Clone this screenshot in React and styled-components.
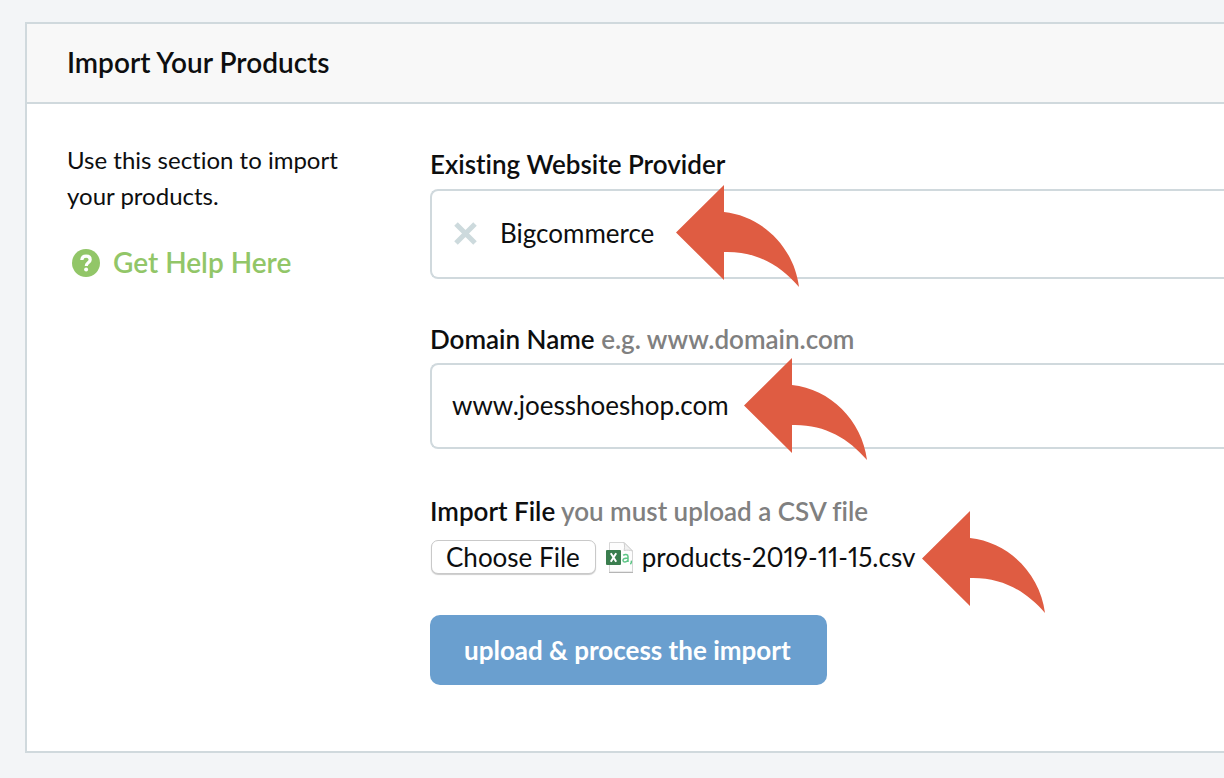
import React, { useRef, useState } from "react";
import styled, { createGlobalStyle } from "styled-components";

const GlobalStyle = createGlobalStyle`
  * {
    box-sizing: border-box;
  }

  body {
    margin: 0;
    background: #f3f5f7;
    color: #0d0e0f;
    font-family: Lato, "Open Sans", sans-serif;
    font-size: 24px;
    font-variant-ligatures: none;
  }

  button, input, select {
    font-family: inherit;
    color: inherit;
  }
`;

// Layout
const Page = styled.main`
  padding: 22px 0 25px 25px;
`;

const Panel = styled.section`
  background: #fff;
  border: 2px solid #d0d9dd;
  border-right: none;
`;

const PanelHeader = styled.header`
  padding: 20px 40px 22px;
  background: #f8f8f8;
  border-bottom: 2px solid #d0d9dd;
`;

const PanelTitle = styled.h1`
  margin: 0;
  font-size: 28px;
  line-height: 36px;
  font-weight: 600;
`;

const PanelBody = styled.div`
  display: grid;
  grid-template-columns: 323px 1fr;
  column-gap: 40px;
  padding: 38px 0 66px 40px;
`;

// Left column
const Intro = styled.p`
  width: 280px;
  margin: 0;
  line-height: 36px;
`;

const HelpLink = styled.a`
  display: flex;
  align-items: center;
  gap: 12px;
  margin-top: 30px;
  padding-left: 4px;
  color: #92c668;
  font-size: 28px;
  line-height: 36px;
  font-weight: 600;
  text-decoration: none;
`;

// Form
const Form = styled.form`
  display: flex;
  flex-direction: column;
  padding-top: 6px;
`;

const Field = styled.div`
  position: relative;
  margin-bottom: ${(props) => props.$gap || 44}px;
`;

const Label = styled.label`
  display: block;
  margin-bottom: ${(props) => props.$gap || 9}px;
  font-size: 26px;
  line-height: 32px;
  font-weight: 600;
`;

const Hint = styled.span`
  color: #808080;
`;

const Control = styled.div`
  position: relative;
  display: flex;
  align-items: center;
  height: ${(props) => props.$height}px;
  padding: 0 0 3px 20px;
  background: #fff;
  border: 2px solid #d0d9dd;
  border-right: none;
  border-radius: 8px 0 0 8px;
`;

const ClearButton = styled.button`
  display: flex;
  padding: 4px 2px 2px;
  margin-right: 21px;
  background: none;
  border: none;
  cursor: pointer;
`;

const ProviderSelect = styled.select`
  flex: 1;
  appearance: none;
  padding: 0;
  background: none;
  border: none;
  outline: none;
  font-size: 26px;
  line-height: 32px;
`;

const DomainInput = styled.input`
  flex: 1;
  min-width: 0;
  padding: 0;
  background: none;
  border: none;
  outline: none;
  font-size: 26px;
  line-height: 32px;
`;

const FileRow = styled.div`
  position: relative;
  display: flex;
  align-items: center;
  height: 36px;
`;

const HiddenFile = styled.input`
  position: absolute;
  width: 1px;
  height: 1px;
  opacity: 0;
  pointer-events: none;
`;

const ChooseButton = styled.button`
  height: 34px;
  margin: 0 10px 0 1px;
  padding: 0 15px 1px 14px;
  background: #fff;
  border: 1px solid #c9c9c9;
  border-radius: 7px;
  box-shadow: 0 1px 1px rgba(0, 0, 0, 0.2);
  font-size: 26px;
  line-height: 30px;
`;

const FileName = styled.span`
  margin-left: 8px;
  font-size: 26px;
  line-height: 32px;
  font-variant-numeric: proportional-nums;
`;

const SubmitButton = styled.button`
  align-self: flex-start;
  height: 70px;
  padding: 0 36px 0 34px;
  background: #6a9fcf;
  border: none;
  border-radius: 10px;
  color: #fff;
  font-size: 26px;
  line-height: 32px;
  font-weight: 700;
  cursor: pointer;
`;

// Red arrows that sit over the fields
const ArrowSvg = styled.svg`
  position: absolute;
  left: ${(props) => props.$left}px;
  top: ${(props) => props.$top}px;
  pointer-events: none;
`;

const Arrow = ({ left, top }) => (
  <ArrowSvg $left={left} $top={top} width="124" height="103" viewBox="0 0 124 103" aria-hidden="true">
    <path d="M0 47.5L48 0V27C86 31 118 62 123 102C104 80 80 66 48 67V95Z" fill="#df5c42" />
  </ArrowSvg>
);

const HelpIcon = () => (
  <svg width="30" height="30" viewBox="0 0 30 30" aria-hidden="true">
    <circle cx="15" cy="16" r="14" fill="#92c668" />
    <path
      d="M10.8 13C11 10.4 12.6 9.2 15.1 9.2C17.6 9.2 19.2 10.6 19.2 12.7C19.2 14.5 18 15.2 16.9 16C15.8 16.8 15.3 17.3 15.3 19"
      fill="none"
      stroke="#fff"
      strokeWidth="3.2"
    />
    <circle cx="15.1" cy="22.4" r="2" fill="#fff" />
  </svg>
);

const CrossIcon = () => (
  <svg width="23" height="23" viewBox="0 0 23 23" aria-hidden="true">
    <path d="M2 2L21 21M21 2L2 21" stroke="#cddadd" strokeWidth="5" />
  </svg>
);

const CsvIcon = () => (
  <svg width="28" height="32" viewBox="0 0 28 32" aria-hidden="true">
    <path d="M3.5 1.5H18L26.5 10V31H3.5Z" fill="#fdfdfd" stroke="#d6d6d6" />
    <path d="M3 31.5H27" stroke="#b5b5b5" />
    <path d="M18 1.5C19 5 18.5 8 18 9.5C21 9 24 9 26.5 10Z" fill="#f1f1f1" stroke="#cfcfcf" />
    <rect x="0" y="9" width="15" height="15" rx="1" fill="#3a7d4e" />
    <path d="M4.8 12.3L10.2 20.7M10.2 12.3L4.8 20.7" stroke="#fff" strokeWidth="2" />
    <path
      d="M17.2 14.4C18.6 13 22 12.8 22 15.5V21M22 17C19 17 17 17.6 17 19.3C17 21.6 20.8 21.3 22 19.2M25.4 19.6C25.6 21.3 25.2 22.3 24.4 23.2"
      fill="none"
      stroke="#5cc585"
      strokeWidth="1.5"
    />
  </svg>
);

const App = () => {
  const fileInput = useRef(null);
  const [provider, setProvider] = useState("Bigcommerce");
  const [domain, setDomain] = useState("www.joesshoeshop.com");
  const [fileName, setFileName] = useState("products-2019-11-15.csv");

  return (
    <Page>
      <GlobalStyle />
      <Panel>
        <PanelHeader>
          <PanelTitle>Import Your Products</PanelTitle>
        </PanelHeader>
        <PanelBody>
          <div>
            <Intro>Use this section to import your products.</Intro>
            <HelpLink href="#help">
              <HelpIcon />
              Get Help Here
            </HelpLink>
          </div>
          <Form onSubmit={(e) => e.preventDefault()}>
            <Field>
              <Label htmlFor="provider">Existing Website Provider</Label>
              <Control $height={90}>
                <ClearButton type="button" aria-label="Clear provider" onClick={() => setProvider("")}>
                  <CrossIcon />
                </ClearButton>
                <ProviderSelect id="provider" value={provider} onChange={(e) => setProvider(e.target.value)}>
                  <option value="" />
                  <option>Bigcommerce</option>
                </ProviderSelect>
                <Arrow left={244} top={-6} />
              </Control>
            </Field>

            <Field $gap={46}>
              <Label htmlFor="domain" $gap={8}>
                Domain Name <Hint>e.g. www.domain.com</Hint>
              </Label>
              <Control $height={86}>
                <DomainInput id="domain" type="text" value={domain} onChange={(e) => setDomain(e.target.value)} />
                <Arrow left={312} top={-7} />
              </Control>
            </Field>

            <Field $gap={40}>
              <Label htmlFor="import-file" $gap={12}>
                Import File <Hint>you must upload a CSV file</Hint>
              </Label>
              <FileRow>
                <HiddenFile
                  id="import-file"
                  type="file"
                  accept=".csv"
                  ref={fileInput}
                  tabIndex={-1}
                  onChange={(e) => e.target.files[0] && setFileName(e.target.files[0].name)}
                />
                <ChooseButton type="button" onClick={() => fileInput.current.click()}>
                  Choose File
                </ChooseButton>
                <CsvIcon />
                <FileName>{fileName}</FileName>
                <Arrow left={492} top={-28} />
              </FileRow>
            </Field>

            <SubmitButton type="submit">upload &amp; process the import</SubmitButton>
          </Form>
        </PanelBody>
      </Panel>
    </Page>
  );
};

export default App;
